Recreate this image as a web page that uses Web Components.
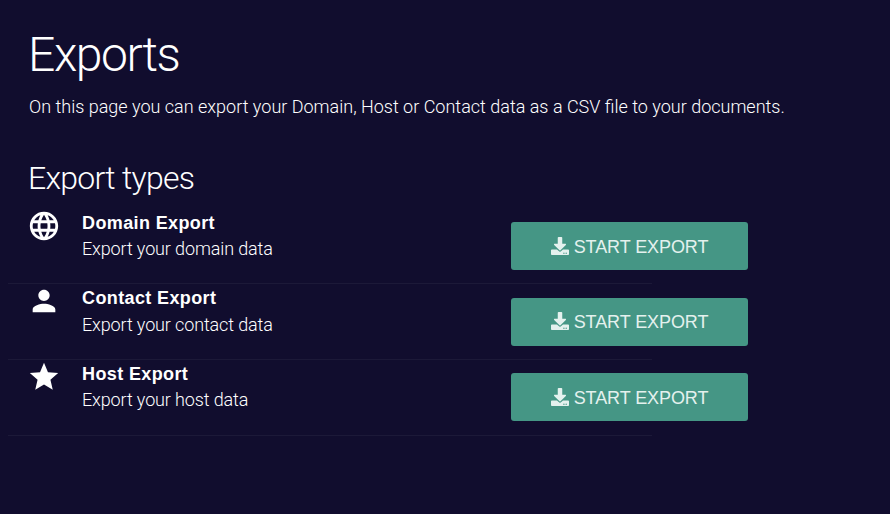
<!DOCTYPE html>
<html lang="en">
<head>
<meta charset="utf-8">
<title>Exports</title>
<style>
  html, body { margin: 0; background: #110d2e; }
  body { font-family: Roboto, 'Liberation Sans', sans-serif; color: #fff; }
</style>
</head>
<body>
<exports-page>
  <export-row title="Domain Export" subtitle="Export your domain data" icon="language"></export-row>
  <export-row title="Contact Export" subtitle="Export your contact data" icon="person"></export-row>
  <export-row title="Host Export" subtitle="Export your host data" icon="star"></export-row>
</exports-page>

<script>
const ICONS = {
  language: 'M11.99 2C6.47 2 2 6.48 2 12s4.47 10 9.99 10C17.52 22 22 17.52 22 12S17.52 2 11.99 2zm6.93 6h-2.95c-.32-1.25-.78-2.45-1.38-3.56 1.84.63 3.37 1.91 4.33 3.56zM12 4.04c.83 1.2 1.48 2.53 1.91 3.96h-3.82c.43-1.43 1.08-2.76 1.91-3.96zM4.26 14C4.1 13.36 4 12.69 4 12s.1-1.36.26-2h3.38c-.08.66-.14 1.32-.14 2 0 .68.06 1.34.14 2H4.26zm.82 2h2.95c.32 1.25.78 2.45 1.38 3.56-1.84-.63-3.37-1.9-4.33-3.56zm2.95-8H5.08c.96-1.66 2.49-2.93 4.33-3.56C8.81 5.55 8.35 6.75 8.03 8zM12 19.96c-.83-1.2-1.48-2.53-1.91-3.96h3.82c-.43 1.43-1.08 2.76-1.91 3.96zM14.34 14H9.66c-.09-.66-.16-1.32-.16-2 0-.68.07-1.35.16-2h4.68c.09.65.16 1.32.16 2 0 .68-.07 1.34-.16 2zm.25 5.56c.6-1.11 1.06-2.31 1.38-3.56h2.95c-.96 1.65-2.49 2.93-4.33 3.56zM16.36 14c.08-.66.14-1.32.14-2 0-.68-.06-1.34-.14-2h3.38c.16.64.26 1.31.26 2s-.1 1.36-.26 2h-3.38z',
  person: 'M12 12c2.21 0 4-1.79 4-4s-1.79-4-4-4-4 1.79-4 4 1.79 4 4 4zm0 2c-2.67 0-8 1.34-8 4v2h16v-2c0-2.66-5.33-4-8-4z',
  star: 'M12 17.27L18.18 21l-1.64-7.03L22 9.24l-7.19-.61L12 2 9.19 8.63 2 9.24l5.46 4.73L5.82 21z',
};

class ExportButton extends HTMLElement {
  constructor() {
    super();
    this.attachShadow({ mode: 'open' });
  }

  connectedCallback() {
    this.shadowRoot.innerHTML = `
      <style>
        :host { display: block; flex: none; }
        button {
          display: flex;
          align-items: center;
          justify-content: center;
          gap: 5px;
          width: 237px;
          height: 48px;
          padding: 0;
          border: none;
          border-radius: 3px;
          background-color: #459685;
          color: #e4f1ee;
          font-family: 'Liberation Sans', sans-serif;
          font-size: 18px;
          letter-spacing: -.08px;
          cursor: pointer;
        }
        svg { width: 18px; height: 18px; margin-top: -1px; }
        span { padding-top: 2px; }
      </style>
      <button type="button">
        <svg viewBox="0 0 512 512" fill="currentColor"><path d="M216 0h80c13.3 0 24 10.7 24 24v168h87.7c17.8 0 26.7 21.5 14.1 34.1L269.7 378.3c-7.5 7.5-19.8 7.5-27.3 0L90.1 226.1c-12.6-12.6-3.7-34.1 14.1-34.1H192V24c0-13.3 10.7-24 24-24zm296 376v112c0 13.3-10.7 24-24 24H24c-13.3 0-24-10.7-24-24V376c0-13.3 10.7-24 24-24h146.7l49 49c20.1 20.1 52.5 20.1 72.6 0l49-49H488c13.3 0 24 10.7 24 24zm-124 88c0-11-9-20-20-20s-20 9-20 20 9 20 20 20 20-9 20-20zm64 0c0-11-9-20-20-20s-20 9-20 20 9 20 20 20 20-9 20-20z"/></svg>
        <span><slot>START EXPORT</slot></span>
      </button>
    `;
  }
}

class ExportRow extends HTMLElement {
  constructor() {
    super();
    this.attachShadow({ mode: 'open' });
  }

  connectedCallback() {
    const title = this.getAttribute('title') || '';
    const subtitle = this.getAttribute('subtitle') || '';
    const icon = ICONS[this.getAttribute('icon')] || '';

    this.shadowRoot.innerHTML = `
      <style>
        :host {
          display: flex;
          width: 644px;
          height: 75.6px;
          box-sizing: border-box;
          border-bottom: 1px solid #1c1938;
          padding-left: 19px;
        }
        svg { flex: none; width: 34px; height: 34px; fill: #fff; }
        .text { flex: none; width: 429px; margin-left: 21px; padding-top: 3px; }
        .title {
          font-family: 'Liberation Sans', sans-serif;
          font-weight: 700;
          font-size: 18px;
          line-height: 22px;
          letter-spacing: .38px;
        }
        .subtitle {
          font-weight: 300;
          font-size: 18px;
          line-height: 22px;
          margin-top: 4.3px;
          letter-spacing: -.13px;
        }
        export-button { margin-top: 13.3px; }
      </style>
      <svg viewBox="0 0 24 24"><path d="${icon}"/></svg>
      <div class="text">
        <div class="title">${title}</div>
        <div class="subtitle">${subtitle}</div>
      </div>
      <export-button></export-button>
    `;
  }
}

class ExportsPage extends HTMLElement {
  constructor() {
    super();
    this.attachShadow({ mode: 'open' });
  }

  connectedCallback() {
    this.shadowRoot.innerHTML = `
      <style>
        :host { display: block; padding: 27px 0 0 8px; }
        .intro { padding-left: 21px; }
        h1 {
          margin: 0 0 0 -1px;
          font-weight: 300;
          font-size: 48px;
          line-height: 56px;
          letter-spacing: -1.4px;
        }
        p {
          margin: 12px 0 0;
          font-weight: 300;
          font-size: 18px;
          line-height: 24px;
        }
        h2 {
          margin: 40px 0 7.9px -1px;
          font-weight: 300;
          font-size: 32px;
          line-height: 38px;
          height: 42px;
          letter-spacing: -.75px;
        }
      </style>
      <div class="intro">
        <h1>Exports</h1>
        <p>On this page you can export your Domain, Host or Contact data as a CSV file to your documents.</p>
        <h2>Export types</h2>
      </div>
      <slot></slot>
    `;
  }
}

customElements.define('export-button', ExportButton);
customElements.define('export-row', ExportRow);
customElements.define('exports-page', ExportsPage);
</script>
</body>
</html>
